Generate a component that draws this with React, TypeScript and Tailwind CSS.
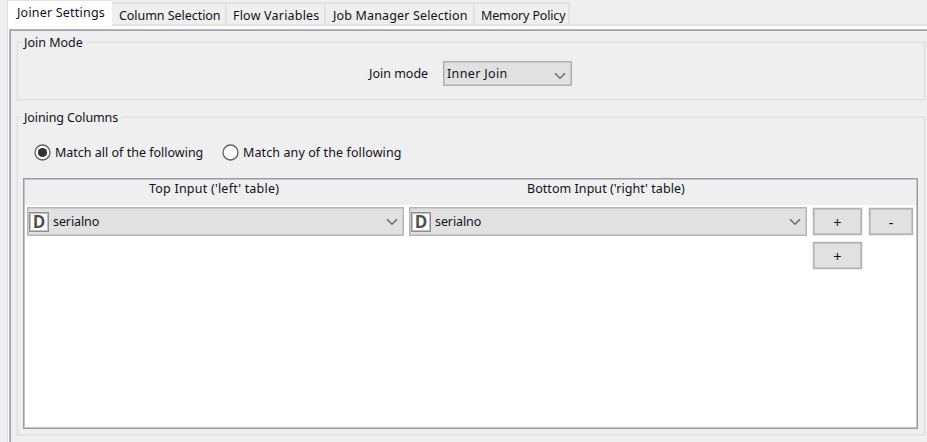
import React from "react";

function Chevron({ className }: { className: string }) {
  return (
    <svg className={`shrink-0 ${className}`} width="12" height="8" viewBox="0 0 12 8" fill="none">
      <path d="M1 1.3 L6 6.2 L11 1.3" stroke="#6c6c6c" strokeWidth="1.6" />
    </svg>
  );
}

function Tab({ label, className }: { label: string; className: string }) {
  return (
    <div className={`mt-[2px] h-[22px] border-t-2 border-r-2 border-[#e3e3e3] pt-[4px] ${className}`}>
      {label}
    </div>
  );
}

function Group({ title, titleClass, className, children }: {
  title: string;
  titleClass: string;
  className: string;
  children: React.ReactNode;
}) {
  return (
    <fieldset className={`relative ml-[6px] w-[908px] border border-[#dfdfdf] outline outline-1 outline-[#e8e8e8] ${className}`}>
      <span className={`absolute -top-[9px] left-[4px] h-4 bg-[#efefef] pl-[2px] ${titleClass}`}>{title}</span>
      {children}
    </fieldset>
  );
}

function Radio({ checked, label, className }: { checked?: boolean; label: string; className: string }) {
  return (
    <label className={`flex items-center ${className}`}>
      <svg className="mr-[4px] shrink-0" width="17" height="17" viewBox="0 0 17 17">
        <circle cx="8.5" cy="8.5" r="7.5" fill="white" stroke="#606060" strokeWidth="1.3" />
        {checked && <circle cx="8.5" cy="8.5" r="4.6" fill="#333333" />}
      </svg>
      <span>{label}</span>
    </label>
  );
}

function ColumnSelect({ className }: { className: string }) {
  return (
    <div className={`flex h-[29px] items-center border border-[#b6b6b6] bg-[#e1e1e1] pl-px shadow-[inset_0_0_0_1px_#cacaca] ${className}`}>
      <span className="flex h-[20px] w-[20px] items-center justify-center border border-[#8f8f8f] bg-white pb-px font-['Open_Sans',sans-serif] text-[17px] leading-[17px] font-bold text-[#505050] shadow-[inset_0_0_0_1px_#c0c0c0]">
        D
      </span>
      <span className="ml-[4px] tracking-[-0.1px]">serialno</span>
      <Chevron className="mr-[5px] ml-auto" />
    </div>
  );
}

function PushButton({ label, className }: { label: string; className: string }) {
  return (
    <button className={`flex h-[27px] items-center justify-center border border-[#b3b3b3] bg-[#e1e1e1] text-[14.5px] shadow-[inset_0_0_0_1px_#c4c4c4,0_0_0_1px_#eeeeee] ${className}`}>
      {label}
    </button>
  );
}

export default function App() {
  return (
    <div className="flex h-[442px] w-[927px] flex-col overflow-hidden bg-[#efefef] pl-[7px] font-['Noto_Sans',sans-serif] text-[12.5px] leading-[16px] whitespace-nowrap text-[#111118]">
      <nav className="flex h-[24px]">
        <div className="relative z-10 h-[27px] w-[105px] border-t border-l border-[#e3e3e3] bg-white pt-[4px] pl-[9px] tracking-[0.2px]">
          Joiner Settings
        </div>
        <Tab label="Column Selection" className="w-[115px] pl-[7px] tracking-[-0.05px]" />
        <Tab label="Flow Variables" className="w-[99px] pl-[6px] tracking-[0.2px]" />
        <Tab label="Job Manager Selection" className="w-[149px] pl-[7px] tracking-[0.15px]" />
        <Tab label="Memory Policy" className="w-[95px] pl-[6px] tracking-[-0.15px]" />
      </nav>
      <main className="flex-1 border-t-2 border-l border-[#e3e3e3]">
        <div className="h-full border-t-[3px] border-l border-white">
          <div className="h-full border-t border-l border-[#b5b7bc]">
            <div className="h-full border-t border-l border-[#a0a3ab] pt-[11px]">
              <Group title="Join Mode" titleClass="w-[65px] mt-px" className="h-[58px]">
                <div className="flex h-full items-center pt-[5px] pl-[351px]">
                  <span className="w-[74px] pt-px">Join mode</span>
                  <div className="flex h-[25px] w-[129px] items-center border border-[#adadb4] bg-[#e1e1e1] pl-[3px] shadow-[inset_0_0_0_1px_#c8c8cc]">
                    <span className="pt-px tracking-[0.35px]">Inner Join</span>
                    <Chevron className="mt-[5px] mr-[5px] ml-auto" />
                  </div>
                </div>
              </Group>
              <Group title="Joining Columns" titleClass="w-[99px] tracking-[-0.1px] mt-px" className="mt-[17px] h-[318px]">
                <div className="flex pt-[26px] pl-[16px]">
                  <Radio checked label="Match all of the following" className="w-[188px]" />
                  <Radio label="Match any of the following" className="tracking-[0.1px]" />
                </div>
                <section className="mt-[17px] ml-[5px] h-[251px] w-[895px] border border-[#989ca5] bg-white shadow-[inset_0_0_0_1px_#c2c5ca]">
                  <div className="mx-px mt-px flex h-[25px] bg-[#efefef] pt-px">
                    <span className="w-[378px] pl-[124px] tracking-[0.22px]">Top Input ('left' table)</span>
                    <span className="pl-[124px] tracking-[0.05px]">Bottom Input ('right' table)</span>
                  </div>
                  <div className="mt-[2px] flex items-center pl-[3px]">
                    <ColumnSelect className="w-[377px]" />
                    <ColumnSelect className="ml-[5px] w-[398px]" />
                    <PushButton label="+" className="ml-[6px] w-[49px]" />
                    <PushButton label="-" className="ml-[7px] w-[44px]" />
                  </div>
                  <PushButton label="+" className="mt-[6px] ml-[789px] w-[49px]" />
                </section>
              </Group>
            </div>
          </div>
        </div>
      </main>
    </div>
  );
}
